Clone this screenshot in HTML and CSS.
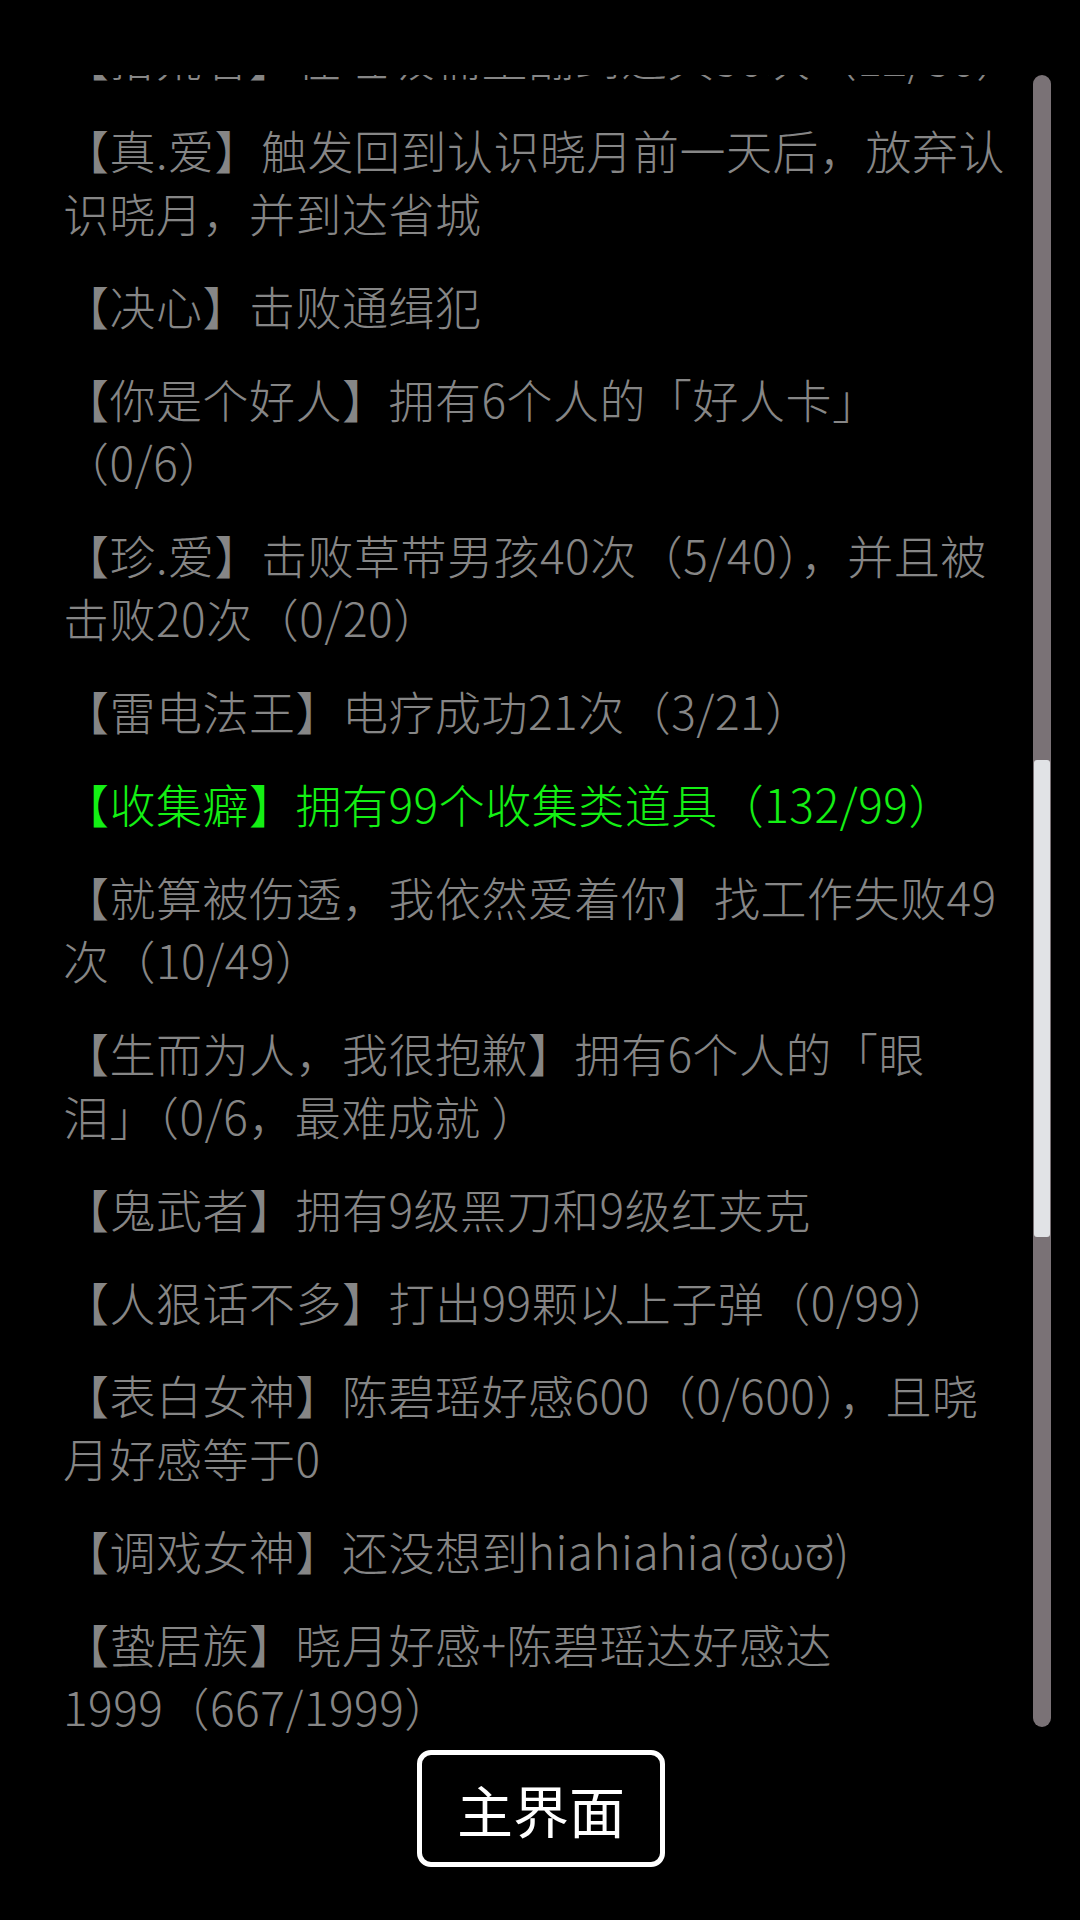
FILE: index.html
```html
<!DOCTYPE html>
<html lang="zh-CN">
<head>
<meta charset="utf-8">
<title>成就</title>
<link rel="stylesheet" href="styles.css">
</head>
<body>
<div class="page">
  <div class="panel">
    <div class="list">
      <div class="items">
        <p class="item">【拾荒者】在垃圾桶里翻到道具30次（12/30）</p>
        <p class="item">【真.爱】触发回到认识晓月前一天后，放弃认识晓月，并到达省城</p>
        <p class="item">【决心】击败通缉犯</p>
        <p class="item">【你是个好人】拥有6个人的「好人卡」<br>（0/6）</p>
        <p class="item">【珍.爱】击败草带男孩40次（5/40），并且被击败20次（0/20）</p>
        <p class="item">【雷电法王】电疗成功21次（3/21）</p>
        <p class="item done">【收集癖】拥有99个收集类道具（132/99）</p>
        <p class="item">【就算被伤透，我依然爱着你】找工作失败49次（10/49）</p>
        <p class="item">【生而为人，我很抱歉】拥有6个人的「眼<br>泪」（0/6，最难成就 ）</p>
        <p class="item">【鬼武者】拥有9级黑刀和9级红夹克</p>
        <p class="item">【人狠话不多】打出99颗以上子弹（0/99）</p>
        <p class="item">【表白女神】陈碧瑶好感600（0/600），且晓月好感等于0</p>
        <p class="item">【调戏女神】还没想到hiahiahia(<span class="kn">ಠωಠ</span>)</p>
        <p class="item">【蛰居族】晓月好感+陈碧瑶达好感达<span class="nowrap">1999（667/1999）</span></p>
      </div>
    </div>
    <div class="scrollbar"><div class="thumb"></div></div>
  </div>
  <div class="actions">
    <button class="main-btn" type="button">主界面</button>
  </div>
</div>
</body>
</html>
```
FILE: styles.css
```css
html, body {
  margin: 0;
  padding: 0;
  background: #000;
}

body {
  width: 1080px;
  height: 1920px;
  overflow: hidden;
  font-family: "Noto Sans CJK SC", "Noto Sans", sans-serif;
}

.page {
  padding-top: 75px;
}

.panel {
  display: flex;
  height: 1652px;
}

.list {
  flex: 1;
  overflow: hidden;
  padding: 0 20px 0 63px;
  margin-bottom: -6px;
}

.items {
  margin-top: -50px;
}

.item {
  margin: 0 0 30px;
  font-size: 46px;
  font-weight: 300;
  line-height: 63px;
  letter-spacing: 0.5px;
  color: #868686;
}

.item.done {
  color: #14f014;
}

.kn {
  font-family: "Noto Sans Kannada", "Lohit Kannada", "Noto Sans", "DejaVu Sans", sans-serif;
  line-height: 0;
}

.nowrap {
  white-space: nowrap;
}

.scrollbar {
  width: 18px;
  margin-right: 29px;
  margin-bottom: 0;
  align-self: flex-start;
  height: 1652px;
  background: #7a7276;
  border-radius: 9px;
  padding-top: 685px;
  box-sizing: border-box;
}

.thumb {
  height: 477px;
  margin: 0 1px;
  background: #e1e3e6;
  border-radius: 3px;
}

.actions {
  display: flex;
  justify-content: center;
  padding-top: 23px;
}

.main-btn {
  width: 248px;
  height: 117px;
  box-sizing: border-box;
  border: 5px solid #fff;
  border-radius: 14px;
  background: #000;
  color: #fff;
  font-family: "Noto Sans CJK SC", "Noto Sans", sans-serif;
  font-size: 56px;
  line-height: 1;
  padding: 0;
  margin-left: 2px;
}
```
